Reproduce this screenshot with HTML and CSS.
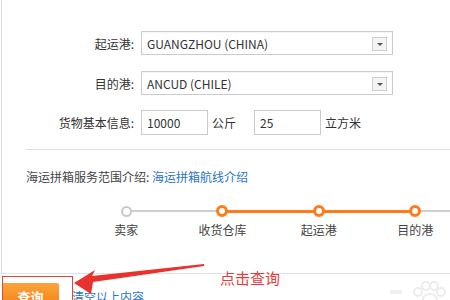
FILE: index.html
```html
<!DOCTYPE html>
<html lang="zh-CN">
<head>
<meta charset="utf-8">
<title>海运拼箱</title>
<link rel="stylesheet" href="styles.css">
</head>
<body>
<div class="page">
  <div class="panel">
    <div class="form-row">
      <div class="label">起运港:</div>
      <div class="select"><span>GUANGZHOU (CHINA)</span><span class="arrow-box"><span class="tri"></span></span></div>
    </div>
    <div class="form-row">
      <div class="label">目的港:</div>
      <div class="select"><span>ANCUD (CHILE)</span><span class="arrow-box"><span class="tri"></span></span></div>
    </div>
    <div class="form-row row-last">
      <div class="label">货物基本信息:</div>
      <div class="input">10000</div>
      <span class="unit unit-gap">公斤</span>
      <div class="input">25</div>
      <span class="unit">立方米</span>
    </div>
    <div class="sep"></div>
    <div class="intro">海运拼箱服务范围介绍: <a class="link">海运拼箱航线介绍</a></div>
    <div class="steps">
      <div class="step first"><div class="track"><span class="line l"></span><span class="line r gray"></span><span class="dot gray"></span></div><div class="step-label">卖家</div></div>
      <div class="step"><div class="track"><span class="line l gray"></span><span class="line r"></span><span class="dot"></span></div><div class="step-label">收货仓库</div></div>
      <div class="step"><div class="track"><span class="line l"></span><span class="line r"></span><span class="dot"></span></div><div class="step-label">起运港</div></div>
      <div class="step"><div class="track"><span class="line l"></span><span class="line r gray"></span><span class="dot"></span></div><div class="step-label">目的港</div></div>
      <div class="step"><div class="track"><span class="line l gray"></span><span class="line r gray"></span></div><div class="step-label"></div></div>
    </div>
  </div>
  <div class="actions">
    <button class="btn">查询</button>
    <a class="link clear">清空以上内容</a>
  </div>

  <div class="note-box"></div>
  <div class="note-text">点击查询</div>
  <svg class="note-arrow" width="450" height="300" viewBox="0 0 450 300">
    <polygon points="74,283 95,270 92,276 204,264 204,266 93,282 91,294" fill="#e8322e"/>
  </svg>
  <svg class="watermark" width="60" height="24" viewBox="0 0 60 24">
    <rect x="2" y="12" width="12" height="4" fill="#f1f1f1"/>
    <circle cx="30" cy="14" r="4" fill="none" stroke="#ececec" stroke-width="2"/>
    <circle cx="38" cy="8" r="4" fill="none" stroke="#ececec" stroke-width="2"/>
    <circle cx="46" cy="8" r="4" fill="none" stroke="#ececec" stroke-width="2"/>
    <circle cx="53" cy="14" r="4" fill="none" stroke="#ececec" stroke-width="2"/>
    <ellipse cx="42" cy="21" rx="7" ry="5" fill="none" stroke="#ececec" stroke-width="2"/>
  </svg>
</div>
</body>
</html>
```
FILE: styles.css
```css
* { box-sizing: border-box; }
html, body { margin: 0; padding: 0; }
body {
  width: 450px;
  height: 300px;
  overflow: hidden;
  background: #fff;
  font-family: "Noto Sans CJK SC", "Liberation Sans", sans-serif;
  font-size: 12px;
  color: #333;
}
.page { position: relative; width: 450px; height: 300px; overflow: hidden; }
.panel {
  margin-left: 1px;
  height: 274px;
  border-left: 1px solid #dcdcdc;
  border-bottom: 1px solid #e2e2e2;
  padding-top: 31px;
}
.form-row {
  display: flex;
  align-items: center;
  height: 24px;
  margin-bottom: 16px;
}
.form-row.row-last { height: 25px; margin-top: -1px; margin-bottom: 0; }
.label {
  width: 132px;
  margin-right: 7px;
  text-align: right;
  color: #333;
  white-space: nowrap;
}
.select {
  width: 252px;
  height: 24px;
  border: 1px solid #cbcbcb;
  display: flex;
  align-items: center;
  justify-content: space-between;
  padding: 0 5px 0 5px;
  color: #333;
  box-shadow: inset 0 1px 1px rgba(0,0,0,0.04);
}
.arrow-box {
  width: 15px;
  height: 14px;
  border: 1px solid #cfcfcf;
  background: #f4f4f4;
  display: flex;
  align-items: center;
  justify-content: center;
  margin-top: 2px;
}
.tri {
  width: 0; height: 0;
  border-left: 3px solid transparent;
  border-right: 3px solid transparent;
  border-top: 3px solid #555;
}
.input {
  width: 67px;
  height: 25px;
  border: 1px solid #cbcbcb;
  padding-left: 5px;
  line-height: 23px;
  color: #333;
}
.unit { margin-left: 4px; color: #333; }
.unit-gap { margin-right: 18px; }
.sep {
  margin-top: 14px;
  margin-left: 24px;
  height: 1px;
  background: #dedede;
}
.intro {
  margin-top: 18px;
  margin-left: 24px;
  line-height: 17px;
  color: #444;
}
.link { color: #2a74c6; text-decoration: none; }
.steps {
  display: flex;
  margin-top: 20px;
  margin-left: 76px;
}
.step { width: 96.33px; flex: none; display: flex; flex-direction: column; align-items: center; }
.track { position: relative; width: 100%; height: 12px; }
.line {
  position: absolute;
  top: 5px;
  height: 2.5px;
  width: 50%;
  background: #ff7b1a;
}
.line.l { left: 0; }
.line.r { right: 0; }
.line.gray { background: #cfcfcf; top: 5px; height: 2px; }
.first .line.l { display: none; }
.dot {
  position: absolute;
  left: 50%;
  top: 0;
  width: 12px;
  height: 12px;
  margin-left: -6px;
  border-radius: 50%;
  border: 3px solid #ff7b1a;
  background: #fff;
}
.dot.gray { border: 2px solid #c9c9c9; width: 11px; height: 11px; margin-left: -5.5px; top: 0.5px; }
.step-label { margin-top: 4px; line-height: 17px; color: #444; white-space: nowrap; }
.actions {
  display: flex;
  align-items: center;
  margin-top: 9px;
  margin-left: 2px;
}
.btn {
  width: 57px;
  height: 26px;
  border: none;
  border-radius: 2px;
  background: linear-gradient(#fca43e, #f27d12);
  color: #fff;
  font-family: "Noto Sans CJK SC", sans-serif;
  font-size: 13px;
  font-weight: bold;
  padding: 0;
}
.clear { margin-left: 13px; }
.note-box {
  position: absolute;
  left: 2px;
  top: 276px;
  width: 71px;
  height: 40px;
  border: 1px solid #e5453f;
}
.note-text {
  position: absolute;
  left: 220px;
  top: 268px;
  font-size: 15px;
  line-height: 20px;
  color: #e63b3b;
}
.note-arrow { position: absolute; left: 0; top: 0; }
.watermark { position: absolute; left: 388px; top: 278px; }
```
